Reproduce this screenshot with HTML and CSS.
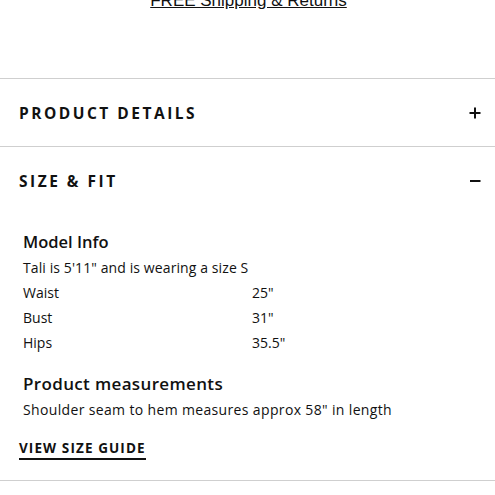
FILE: index.html
```html
<!DOCTYPE html>
<html>
<head>
<meta charset="utf-8">
<link rel="stylesheet" href="styles.css">
</head>
<body>
<div class="top">
  <a class="ship" href="#">FREE Shipping &amp; Returns</a>
</div>
<section class="acc">
  <div class="acc-head">
    <span class="acc-title">PRODUCT DETAILS</span>
    <svg class="icon" width="12" height="12" viewBox="0 0 12 12"><path d="M6 0.5v11M0.5 6h11" stroke="#111" stroke-width="2"/></svg>
  </div>
</section>
<section class="acc">
  <div class="acc-head">
    <span class="acc-title">SIZE &amp; FIT</span>
    <svg class="icon" width="12" height="12" viewBox="0 0 12 12"><path d="M1 6h10.5" stroke="#111" stroke-width="2"/></svg>
  </div>
  <div class="acc-body">
    <h3 class="sub">Model Info</h3>
    <p class="txt">Tali is 5'11" and is wearing a size S</p>
    <div class="grid">
      <span>Waist</span><span>25"</span>
      <span>Bust</span><span>31"</span>
      <span>Hips</span><span>35.5"</span>
    </div>
    <h3 class="sub sub2">Product measurements</h3>
    <p class="txt wide">Shoulder seam to hem measures approx 58" in length</p>
    <a class="guide" href="#">VIEW SIZE GUIDE</a>
  </div>
</section>
</body>
</html>
```
FILE: styles.css
```css
* { box-sizing: border-box; }
html, body { margin: 0; padding: 0; background: #fff; }
body { font-family: "Open Sans", "Liberation Sans", sans-serif; color: #111; width: 495px; overflow: hidden; }
.top { height: 78px; display: flex; justify-content: center; align-items: flex-start; }
.ship { font-family: "Liberation Sans", Arial, sans-serif; font-size: 17px; line-height: 20px; color: #111; text-decoration: underline; margin-top: -9px; margin-left: 2px; }
.acc { border-top: 1px solid #cfcfcf; }
.acc:last-child { border-bottom: 1px solid #cfcfcf; }
.acc-head { height: 67px; display: flex; align-items: center; justify-content: space-between; padding: 0 14px 0 19px; }
.acc-title { font-size: 15.5px; font-weight: 700; letter-spacing: 2.5px; }
.icon { display: block; }
.acc-body { padding: 16px 23px 20px; display: flex; flex-direction: column; align-items: flex-start; }
.sub { margin: 0 0 2px; font-size: 16.5px; line-height: 24px; font-weight: 600; }
.sub2 { margin-top: 17px; font-size: 17px; letter-spacing: 0.35px; }
.txt { margin: 0; font-size: 14px; line-height: 24px; letter-spacing: 0.1px; }
.wide { letter-spacing: 0.35px; }
.grid { display: grid; grid-template-columns: 229px auto; font-size: 14px; line-height: 25px; }
.guide { margin-top: 17px; margin-left: -4px; font-size: 13.5px; font-weight: 700; letter-spacing: 1.1px; color: #111; text-decoration: none; line-height: 18px; border-bottom: 2.5px solid #111; padding-bottom: 1px; }
```
